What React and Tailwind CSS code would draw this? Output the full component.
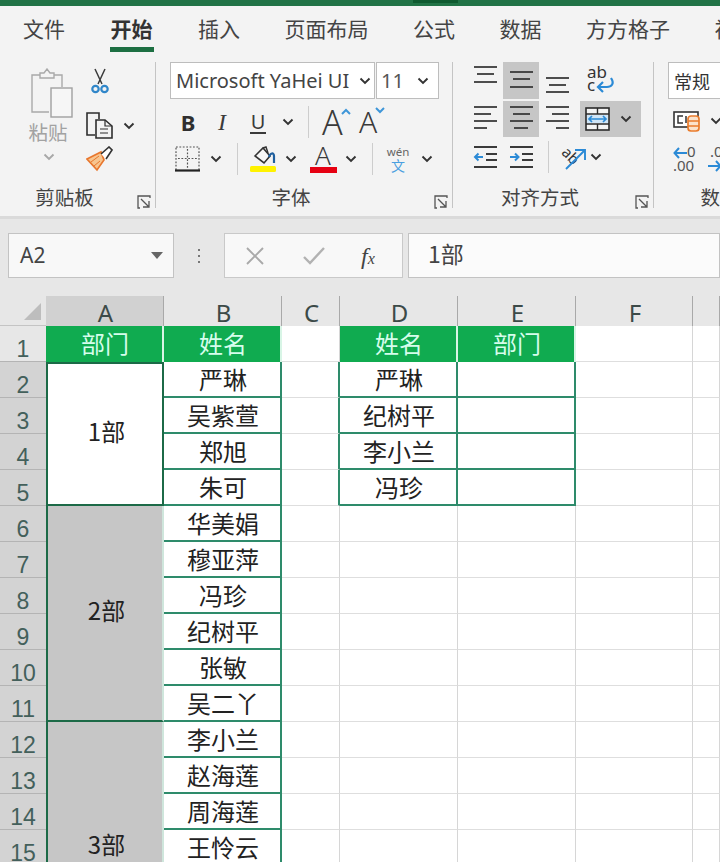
import React from "react";

const CJK = { fontFamily: '"Noto Sans CJK SC","Noto Sans",sans-serif' };
const Chev = ({ c = "#333" }) => (
  <svg width="12" height="8" viewBox="0 0 12 8"><path d="M1.5 1.5 6 6l4.5-4.5" fill="none" stroke={c} strokeWidth="1.9" /></svg>
);
const Slot = ({ w, children, className = "" }) => (
  <div className={`flex items-center justify-center h-full shrink-0 ${className}`} style={{ width: w }}>{children}</div>
);
const VDiv = () => <div className="w-px h-[32px] bg-[#cdcdcd]" />;
const Launcher = () => (
  <svg width="14" height="14" viewBox="0 0 14 14" fill="none" stroke="#555" strokeWidth="1.3">
    <path d="M13 3V1H1v12h2" /><path d="M4 4l8 8M12 6v6H6" />
  </svg>
);

const Group = ({ w, label, launcher = true, children, noBorder }) => (
  <div className={`shrink-0 h-[146px] flex flex-col ${noBorder ? "" : "border-r border-[#c4c4c4]"}`} style={{ width: w }}>
    <div className="h-[124px]">{children}</div>
    <div className="h-[22px] flex items-center">
      <div className="flex-1 text-center text-[19.5px] leading-[22px] text-[#444]" style={CJK}>{label}</div>
      <div className="w-[26px] pl-[8px] pt-[10px] shrink-0">{launcher && <Launcher />}</div>
    </div>
  </div>
);

const Lines = ({ rows, active }) => (
  <div className={`w-[36px] h-full flex items-center justify-center ${active ? "bg-[#c6c6c6]" : ""}`}>
    <svg width="24" height="37" viewBox="0 0 24 37" stroke="#3a3a3a" strokeWidth="1.8">
      {rows.map((r, i) => <path key={i} d={`M${r[1]} ${r[0]}H${r[2]}`} />)}
    </svg>
  </div>
);

const Indent = ({ dir }) => (
  <svg width="24" height="24" viewBox="0 0 24 24" fill="none">
    <path d="M1 2h23M13 9h11M13 15h11M1 22h23" stroke="#3a3a3a" strokeWidth="1.8" />
    {dir === "l"
      ? <path d="M10 12H2M5.5 8.5 2 12l3.5 3.5" stroke="#2b8ad6" strokeWidth="2" />
      : <path d="M1 12h8M6 8.5 9.5 12 6 15.5" stroke="#2b8ad6" strokeWidth="2" />}
  </svg>
);

function Tabs() {
  const tabs = ["文件", "开始", "插入", "页面布局", "公式", "数据", "方方格子", "视图"];
  return (
    <div className="h-[50px] flex gap-[44.5px] pl-[23px] overflow-hidden" style={CJK}>
      {tabs.map((t, i) => (
        <div key={t} className="shrink-0 h-full flex flex-col items-center">
          <div className={`text-[21px] leading-[24px] mt-[10px] whitespace-nowrap ${i === 1 ? "font-bold text-[#333]" : "text-[#444]"}`}>{t}</div>
          {i === 1 && <div className="w-[44px] h-[5px] bg-[#1d6f42] mt-[7px]" />}
        </div>
      ))}
    </div>
  );
}

function Clipboard() {
  return (
    <Group w={156} label="剪贴板">
      <div className="flex h-full pt-[6px]">
        <div className="w-[86px] pl-[12px] flex flex-col items-center shrink-0">
          <svg width="46" height="50" viewBox="0 0 46 50" fill="none" stroke="#a9a9a9" strokeWidth="1.4" className="ml-[6px]">
            <path d="M20 44H3V7h8M25 7h8v12" />
            <path d="M11 10V5h4l3-4 3 4h4v5z" fill="#f3f3f3" />
            <rect x="22" y="20" width="21" height="29" fill="#f6f6f6" stroke="#a0a0a0" />
          </svg>
          <div className="text-[19.5px] leading-[24px] text-[#a2a2a2] mt-[2px] -ml-[2px] w-[46px] text-center whitespace-nowrap" style={CJK}>粘贴</div>
          <div className="mt-[9px]"><Chev c="#a8a8a8" /></div>
        </div>
        <div className="flex flex-col items-start">
          <div className="h-[38px] w-[27px] flex justify-center">
            <svg width="18" height="26" viewBox="0 0 18 26" fill="none">
              <path d="M4 1l7 15M14 1L7 16" stroke="#3b3b3b" strokeWidth="1.5" />
              <circle cx="4.5" cy="21" r="3.2" stroke="#2f86c9" strokeWidth="2.2" />
              <circle cx="13.5" cy="21" r="3.2" stroke="#2f86c9" strokeWidth="2.2" />
            </svg>
          </div>
          <div className="h-[39px] flex items-center">
            <svg width="27" height="27" viewBox="0 0 27 27" fill="none" stroke="#2e2e2e" strokeWidth="1.6">
              <path d="M9 23H1V1h12v6" />
              <path d="M10 8h9l7 6v12H10z" fill="#f3f3f3" />
              <path d="M19 8v6h7M14 17h8M14 21h8" strokeWidth="1.2" />
            </svg>
            <div className="ml-[10px]"><Chev /></div>
          </div>
          <svg width="27" height="26" viewBox="0 0 27 26" fill="none" className="mt-[1px]">
            <path d="M1 13 15 6l3 8-7 10z" fill="#f7c58f" stroke="#e8772e" strokeWidth="1.7" />
            <path d="M5 16l8-6M8 20l6-5" stroke="#e8772e" strokeWidth="1" />
            <path d="M15 8l8-7 3 3-6 9" fill="#fff" stroke="#333" strokeWidth="1.6" />
          </svg>
        </div>
      </div>
    </Group>
  );
}

const TextA = ({ size }) => (
  <span className="font-light text-[#3a3a3a] leading-none" style={{ fontFamily: '"Noto Sans",sans-serif', fontSize: size }}>A</span>
);

function FontGroup() {
  return (
    <Group w={297} label="字体">
      <div className="pl-[14px]">
        <div className="flex gap-px h-[37px]">
          <div className="w-[205px] bg-white border border-[#bdbdbd] flex items-center pl-[5px] pr-[3px] justify-between overflow-hidden">
            <span className="text-[20px] leading-none text-[#444] whitespace-nowrap" style={{ fontFamily: '"Noto Sans",sans-serif' }}>Microsoft YaHei UI</span>
            <Chev />
          </div>
          <div className="w-[63px] bg-white border border-[#bdbdbd] flex items-center pl-[4px] pr-[9px] justify-between">
            <span className="text-[20px] leading-none text-[#555]" style={{ fontFamily: '"Noto Sans",sans-serif' }}>11</span>
            <Chev />
          </div>
        </div>
        <div className="flex items-center h-[36px] mt-[5px]">
          <Slot w={36}><span className="text-[22px] font-bold text-[#2f2f2f]" style={{ fontFamily: '"Noto Sans",sans-serif' }}>B</span></Slot>
          <Slot w={32}><span className="text-[24px] italic text-[#3a3a3a]" style={{ fontFamily: '"Liberation Serif",serif' }}>I</span></Slot>
          <Slot w={40}>
            <span className="text-[20px] leading-[21px] text-[#3a3a3a] border-b-2 border-[#3a3a3a] px-[1px]" style={{ fontFamily: '"Noto Sans",sans-serif' }}>U</span>
          </Slot>
          <Slot w={20}><Chev /></Slot>
          <Slot w={21}><VDiv /></Slot>
          <Slot w={37} className="justify-start pl-[3px]">
            <TextA size={34} />
            <svg width="10" height="24" viewBox="0 0 10 24" className="self-start mt-[4px] -ml-[2px]"><path d="M1 6l4-4 4 4" fill="none" stroke="#3e96d8" strokeWidth="2" /></svg>
          </Slot>
          <Slot w={36} className="justify-start pl-[3px]">
            <TextA size={30} />
            <svg width="10" height="24" viewBox="0 0 10 24" className="self-start mt-[2px] -ml-[2px]"><path d="M1 2l4 4 4-4" fill="none" stroke="#3e96d8" strokeWidth="2" /></svg>
          </Slot>
        </div>
        <div className="flex items-center h-[30px] mt-[4px]">
          <Slot w={34}>
            <svg width="25" height="26" viewBox="0 0 25 26" fill="none">
              <path d="M1 1h23v23M1 24V1M12.5 3v20M3 12.5h20" stroke="#555" strokeWidth="1.2" strokeDasharray="1.8 1.6" />
              <path d="M0 24.5h25" stroke="#222" strokeWidth="2.2" />
            </svg>
          </Slot>
          <Slot w={24}><Chev /></Slot>
          <Slot w={18}><VDiv /></Slot>
          <Slot w={34}>
            <svg width="28" height="28" viewBox="0 0 28 28" fill="none">
              <path d="M6 11l8-8 7 8-6 7z" fill="#f7f7f7" stroke="#333" strokeWidth="1.6" />
              <path d="M14 3l3-1 2 6" stroke="#333" strokeWidth="1.4" />
              <path d="M20 12c1-4 5-5 5-1v7" stroke="#1f5f9e" strokeWidth="2.2" />
              <rect x="1" y="21" width="26" height="6" rx="1.5" fill="#fff200" />
            </svg>
          </Slot>
          <Slot w={22}><Chev /></Slot>
          <Slot w={42}>
            <div className="flex flex-col items-center w-[27px]">
              <span className="font-light text-[26px] leading-[21px] text-[#3a3a3a]" style={{ fontFamily: '"Noto Sans",sans-serif' }}>A</span>
              <div className="w-[27px] h-[6px] bg-[#e60012] mt-[1px]" />
            </div>
          </Slot>
          <Slot w={14}><Chev /></Slot>
          <Slot w={28}><VDiv /></Slot>
          <Slot w={24}>
            <div className="flex flex-col items-center whitespace-nowrap">
              <span className="text-[11.5px] leading-[12px] text-[#666]" style={{ fontFamily: '"Noto Sans",sans-serif' }}>wén</span>
              <span className="text-[14px] leading-[15px] text-[#4a9fe0]" style={CJK}>文</span>
            </div>
          </Slot>
          <Slot w={34}><Chev /></Slot>
        </div>
      </div>
    </Group>
  );
}

function AlignGroup() {
  return (
    <Group w={201} label="对齐方式">
      <div className="pl-[14px]">
        <div className="flex h-[37px]">
          <Lines rows={[[5, 1, 24], [12, 4, 21], [20, 1, 24]]} />
          <Lines active rows={[[10, 1, 24], [17, 4, 21], [25, 1, 24]]} />
          <Lines rows={[[16, 1, 24], [23, 4, 21], [30, 1, 24]]} />
          <Slot w={50}>
            <div className="relative w-[26px] h-[27px]" style={{ fontFamily: '"Noto Sans",sans-serif' }}>
              <span className="absolute left-0 -top-[3px] text-[17px] leading-[16px] text-[#333]">ab</span>
              <span className="absolute left-0 top-[10px] text-[17px] leading-[16px] text-[#333]">c</span>
              <svg width="20" height="18" viewBox="0 0 20 18" className="absolute left-[9px] top-[10px]" fill="none">
                <path d="M15 1c4 6 0 9-4 9H3M7 5 2 10l5 5" stroke="#2b8ad6" strokeWidth="2.2" />
              </svg>
            </div>
          </Slot>
        </div>
        <div className="flex h-[36px] mt-[2px]">
          <Lines rows={[[6, 1, 24], [13, 1, 18], [20, 1, 24], [27, 1, 14]]} />
          <Lines active rows={[[6, 1, 24], [13, 4, 21], [20, 1, 24], [27, 5, 19]]} />
          <Lines rows={[[6, 1, 24], [13, 7, 24], [20, 1, 24], [27, 11, 24]]} />
          <div className="ml-[5px] w-[61px] h-full bg-[#c6c6c6] flex items-center pl-[5px] gap-[10px]">
            <svg width="25" height="24" viewBox="0 0 25 24" fill="none">
              <rect x="1" y="1" width="23" height="22" fill="#f4f4f4" stroke="#2b2b2b" strokeWidth="1.6" />
              <path d="M1 7h23M1 17h23M12.5 1v6M12.5 17v6" stroke="#2b2b2b" strokeWidth="1.4" />
              <rect x="2" y="8" width="21" height="8" fill="#cfe5f7" />
              <path d="M4 12h17M7 9l-3 3 3 3M18 9l3 3-3 3" stroke="#2b8ad6" strokeWidth="1.7" />
            </svg>
            <Chev />
          </div>
        </div>
        <div className="flex items-center h-[34px] mt-[3px]">
          <Slot w={36}><Indent dir="l" /></Slot>
          <Slot w={36}><Indent dir="r" /></Slot>
          <Slot w={18}><VDiv /></Slot>
          <Slot w={32}>
            <svg width="28" height="26" viewBox="0 0 28 26" fill="none">
              <text x="3" y="14" fontSize="15" fill="#333" transform="rotate(45 8 10)" fontFamily="Noto Sans">ab</text>
              <path d="M7 25 25 7M16 6h10v10" stroke="#2b8ad6" strokeWidth="1.9" />
            </svg>
          </Slot>
          <Slot w={14}><Chev /></Slot>
        </div>
      </div>
    </Group>
  );
}

function NumberGroup() {
  return (
    <Group w={158} label="数字" launcher={false} noBorder>
      <div className="pl-[14px] w-[134px]">
        <div className="w-[120px] h-[37px] bg-white border border-[#bdbdbd] flex items-center pl-[5px]">
          <span className="text-[18px] leading-none text-[#333] whitespace-nowrap" style={CJK}>常规</span>
        </div>
        <div className="flex items-center h-[36px] mt-[4px]">
          <svg width="28" height="24" viewBox="0 0 28 24" fill="none" className="ml-[5px]">
            <rect x="1" y="3" width="24" height="15" fill="#fff" stroke="#333" strokeWidth="1.6" />
            <path d="M10 7H5v7h5M13 7v7" stroke="#333" strokeWidth="1.5" />
            <rect x="15" y="7" width="11" height="15" rx="3" fill="#fbe3cc" stroke="#ea7c2c" strokeWidth="1.7" />
            <path d="M15 12h11M15 17h11" stroke="#ea7c2c" strokeWidth="1.4" />
          </svg>
          <div className="ml-[9px]"><Chev /></div>
        </div>
        <div className="flex items-center h-[34px] mt-[3px] ml-[5px] gap-[9px]" style={{ fontFamily: '"Noto Sans",sans-serif' }}>
          <div className="relative w-[26px] h-[26px] shrink-0">
            <svg width="14" height="12" viewBox="0 0 14 12" className="absolute left-0 top-[1px]" fill="none"><path d="M14 6H2M6 1 1.5 6 6 11" stroke="#2b8ad6" strokeWidth="2" /></svg>
            <span className="absolute left-[14px] -top-[3px] text-[15px] leading-[17px] text-[#555]">0</span>
            <span className="absolute left-0 top-[11px] text-[15px] leading-[17px] text-[#555] whitespace-nowrap">.00</span>
          </div>
          <div className="relative w-[26px] h-[26px] shrink-0">
            <span className="absolute left-[2px] -top-[3px] text-[15px] leading-[17px] text-[#555] whitespace-nowrap">.00</span>
            <svg width="14" height="12" viewBox="0 0 14 12" className="absolute left-0 top-[14px]" fill="none"><path d="M0 6h12M8 1l4.5 5L8 11" stroke="#2b8ad6" strokeWidth="2" /></svg>
          </div>
        </div>
      </div>
    </Group>
  );
}

function FormulaBar() {
  return (
    <div className="h-[80px] bg-[#e7e7e7] border-t-[3px] border-[#dadada] pt-[14px] flex items-start">
      <div className="ml-[8px] w-[166px] h-[45px] bg-[#f8f8f8] border border-[#c3c3c3] flex items-center justify-between pl-[11px] pr-[10px]">
        <span className="text-[21px] leading-none text-[#444]" style={{ fontFamily: '"Noto Sans",sans-serif' }}>A2</span>
        <svg width="12" height="7" viewBox="0 0 12 7"><path d="M0 0h12L6 7z" fill="#666" /></svg>
      </div>
      <div className="w-[50px] h-[45px] flex flex-col items-center justify-center gap-[4px]">
        <div className="w-[2px] h-[2px] bg-[#777]" /><div className="w-[2px] h-[2px] bg-[#777]" /><div className="w-[2px] h-[2px] bg-[#777]" />
      </div>
      <div className="w-[179px] h-[45px] bg-[#f8f8f8] border border-[#c9c9c9] flex items-center">
        <svg width="18" height="18" viewBox="0 0 18 18" className="ml-[21px]" fill="none"><path d="M1 1l16 16M17 1 1 17" stroke="#a9a9a9" strokeWidth="1.9" /></svg>
        <svg width="22" height="18" viewBox="0 0 22 18" className="ml-[39px]" fill="none"><path d="M1 10l6 6L21 1" stroke="#b2b2b2" strokeWidth="2.4" /></svg>
        <span className="ml-[36px] text-[24px] italic text-[#444] leading-none" style={{ fontFamily: '"Liberation Serif",serif' }}>f<span className="text-[16px]">x</span></span>
      </div>
      <div className="ml-[5px] flex-1 h-[45px] bg-[#fbfbfb] border border-[#c3c3c3] flex items-center pl-[19px] pb-[4px]">
        <span className="text-[23px] leading-none text-[#444]" style={CJK}>1部</span>
      </div>
    </div>
  );
}

const GRN = "border-[#2e8b6b]";
const names = ["严琳","吴紫萱","郑旭","朱可","华美娟","穆亚萍","冯珍","纪树平","张敏","吴二丫","李小兰","赵海莲","周海莲","王怜云"];
const right = ["严琳","纪树平","李小兰","冯珍"];

const ColH = ({ t, active }) => (
  <div className={`flex items-end justify-center pl-[2px] border-r border-[#a9a9a9] ${active ? "bg-[#d1d1d1]" : "bg-[#e7e7e7]"}`}>
    {t && <span className="text-[24px] leading-[24px] pb-[1px] text-[#3c4a48]" style={{ fontFamily: '"Noto Sans",sans-serif' }}>{t}</span>}
  </div>
);
const RowH = ({ n }) => (
  <div className={`flex items-end justify-center border-b border-[#b4b4b4] ${n === 1 ? "bg-[#e7e7e7]" : "bg-[#d3d3d3]"}`}>
    <span className="text-[23px] leading-[23px] text-[#43605b]" style={{ fontFamily: '"Liberation Sans",sans-serif' }}>{n}</span>
  </div>
);
const Head = ({ t }) => (
  <div className="bg-[#10ab50] border-r-2 border-[#d8f5e6] flex items-center justify-center pl-[2px] pb-[2px] text-[24px] leading-none text-[#d6fdec]" style={CJK}>{t}</div>
);
const Blank = ({ edge }) => <div className={`bg-white border-b border-[#dedede] border-r ${edge ? "border-r-2 border-r-[#2e8b6b]" : "border-r-[#d6d6d6]"}`} />;
const NameC = ({ t }) => (
  <div className={`bg-white border-b-2 border-r-2 ${GRN} flex items-center justify-center pl-[2px] text-[24px] leading-none text-[#222]`} style={CJK}>{t}</div>
);
const Merge = ({ t, span, cls }) => (
  <div className={`${span} ${cls} flex items-center justify-center pl-[3px] text-[24px] leading-none text-[#222]`} style={CJK}>{t}</div>
);

function Sheet() {
  const rows = [];
  for (let r = 2; r <= 15; r++) {
    const i = r - 2;
    rows.push(
      <React.Fragment key={r}>
        <RowH n={r} />
        {r === 2 && <Merge t="1部" span="row-span-4" cls="pb-[6px] bg-white border-2 border-[#1c6a47]" />}
        {r === 6 && <Merge t="2部" span="row-span-6" cls="pb-[6px] bg-[#c6c6c6] border-l-2 border-l-[#1c6a47] border-r-2 border-r-[#cfe6dc] border-b-2 border-b-[#1c6a47]" />}
        {r === 12 && <Merge t="3部" span="row-span-7" cls="pb-[8px] bg-[#c6c6c6] border-l-2 border-l-[#1c6a47] border-r-2 border-r-[#cfe6dc]" />}
        <NameC t={names[i]} />
        <Blank edge={r <= 5} />
        {r <= 5 ? <NameC t={right[i]} /> : <Blank />}
        {r <= 5 ? <NameC /> : <Blank />}
        <Blank />
        <Blank />
      </React.Fragment>
    );
  }
  return (
    <div className="grid grid-cols-[46px_118px_118px_58px_118px_118px_117px_27px] grid-rows-[30px_36px_repeat(17,36px)] bg-white">
      <div className="bg-[#e7e7e7] border-b border-[#c4c4c4] flex items-end justify-end pr-[5px] pb-[5px]">
        <svg width="17" height="17" viewBox="0 0 17 17"><path d="M17 0v17H0z" fill="#bdbdbd" /></svg>
      </div>
      <ColH t="A" active /><ColH t="B" /><ColH t="C" /><ColH t="D" /><ColH t="E" /><ColH t="F" /><ColH />
      <RowH n={1} />
      <Head t="部门" /><Head t="姓名" />
      <Blank />
      <Head t="姓名" /><Head t="部门" />
      <Blank /><Blank />
      {rows}
    </div>
  );
}

export default function App() {
  return (
    <div className="w-[720px] h-[862px] overflow-hidden bg-white" style={CJK}>
      <div className="h-[6px] bg-[#217346] pl-[413px]"><div className="w-[45px] h-[3px] bg-[#0f5a30]" /></div>
      <div className="h-[210px] bg-[#f3f3f3] overflow-hidden">
        <Tabs />
        <div className="flex pt-[6px]">
          <Clipboard />
          <FontGroup />
          <AlignGroup />
          <NumberGroup />
        </div>
      </div>
      <FormulaBar />
      <Sheet />
    </div>
  );
}
